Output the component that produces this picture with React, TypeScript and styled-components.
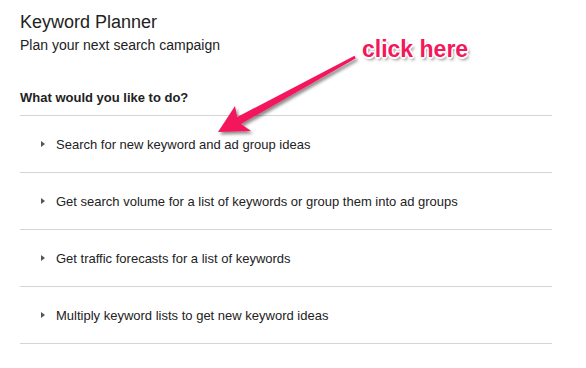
import React from "react";
import styled, { createGlobalStyle } from "styled-components";

const GlobalStyle = createGlobalStyle`
  html, body {
    margin: 0;
    padding: 0;
    background: #ffffff;
  }
  body {
    font-family: "Liberation Sans", Arial, sans-serif;
    color: #222222;
  }
`;

const pink = "#f3175b";

const Page = styled.div`
  position: relative;
  width: 586px;
  height: 368px;
  padding: 12px 34px 0 20px;
  box-sizing: border-box;
  overflow: hidden;
`;

const Title = styled.h1`
  margin: 0;
  font-size: 18px;
  line-height: 21px;
  font-weight: normal;
  color: #222222;
`;

const Subtitle = styled.p`
  margin: 4px 0 0;
  font-size: 14px;
  line-height: 16px;
  color: #222222;
`;

const Question = styled.h2`
  margin: 37px 0 0;
  padding-bottom: 10px;
  font-size: 13px;
  line-height: 15px;
  font-weight: bold;
  color: #222222;
  border-bottom: 1px solid #d4d4d4;
`;

const Options = styled.ul`
  list-style: none;
  margin: 0;
  padding: 0;
`;

const Option = styled.li`
  display: flex;
  align-items: center;
  height: 56px;
  border-bottom: 1px solid #d4d4d4;
  font-size: 13px;
  color: #222222;
  cursor: pointer;
`;

const Caret = styled.span`
  width: 0;
  height: 0;
  margin: 0 11px 0 21px;
  border-top: 3.5px solid transparent;
  border-bottom: 3.5px solid transparent;
  border-left: 4px solid #555555;
`;

const Overlay = styled.svg`
  position: absolute;
  left: 0;
  top: 0;
  pointer-events: none;
`;

const Callout = styled.span`
  position: absolute;
  left: 362px;
  top: 38px;
  font-size: 23px;
  line-height: 23px;
  font-weight: bold;
  color: ${pink};
  text-shadow:
    -1px -1px 0 #fff, 1px -1px 0 #fff, -1px 1px 0 #fff, 1px 1px 0 #fff,
    0 -1.5px 0 #fff, 0 1.5px 0 #fff, -1.5px 0 0 #fff, 1.5px 0 0 #fff,
    2px 3px 3px rgba(0, 0, 0, 0.45);
`;

const options = [
  "Search for new keyword and ad group ideas",
  "Get search volume for a list of keywords or group them into ad groups",
  "Get traffic forecasts for a list of keywords",
  "Multiply keyword lists to get new keyword ideas",
];

const App: React.FC = () => {
  return (
    <>
      <GlobalStyle />
      <Page>
        <Title>Keyword Planner</Title>
        <Subtitle>Plan your next search campaign</Subtitle>
        <Question>What would you like to do?</Question>
        <Options>
          {options.map((text) => (
            <Option key={text}>
              <Caret />
              {text}
            </Option>
          ))}
        </Options>

        <Overlay width="586" height="368" viewBox="0 0 586 368">
          <defs>
            <filter id="arrowShadow" x="-20%" y="-20%" width="140%" height="140%">
              <feDropShadow dx="2" dy="2.5" stdDeviation="1.5" floodColor="#000" floodOpacity="0.45" />
            </filter>
          </defs>
          <polygon
            points="218,132 235,106 237.2,117 354.5,55.8 355.8,58.2 241,124 251,131"
            fill={pink}
            filter="url(#arrowShadow)"
          />
        </Overlay>
        <Callout>click here</Callout>
      </Page>
    </>
  );
};

export default App;
